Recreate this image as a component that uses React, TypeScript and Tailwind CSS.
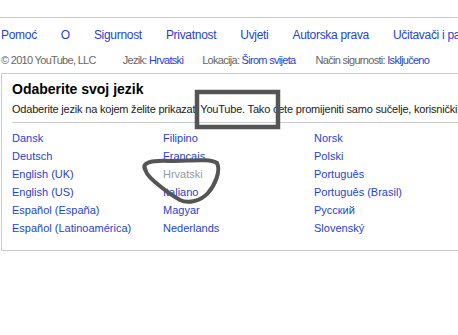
const navLinks = ["Pomoć", "O", "Sigurnost", "Privatnost", "Uvjeti", "Autorska prava", "Učitavači i partneri"];

const columns = [
  ["Dansk", "Deutsch", "English (UK)", "English (US)", "Español (España)", "Español (Latinoamérica)"],
  ["Filipino", "Français", "Hrvatski", "Italiano", "Magyar", "Nederlands"],
  ["Norsk", "Polski", "Português", "Português (Brasil)", "Русский", "Slovenský"],
];

const current = "Hrvatski";

function MetaItem({ label, value, className }: { label: string; value: string; className?: string }) {
  return (
    <span className={className}>
      {label} <span className="text-[#1f44cc]">{value}</span>
    </span>
  );
}

export default function App() {
  return (
    <div className="relative w-[458px] h-[335px] overflow-hidden bg-white font-['Liberation_Sans',Arial,sans-serif]">
      <div className="w-[980px]">
        <div className="mt-[17px] border-t border-[#cccccc]" />

        <nav className="mt-[9px] pl-px flex gap-[24px] text-[12px] leading-[16px] tracking-[-0.3px] text-[#1f44cc] whitespace-nowrap">
          {navLinks.map((l) => (
            <a key={l}>{l}</a>
          ))}
        </nav>

        <div className="mt-[10px] pl-px flex text-[11px] leading-[14px] tracking-[-0.7px] text-[#666666] whitespace-nowrap">
          <span>© 2010 YouTube, LLC</span>
          <MetaItem className="ml-[27px]" label="Jezik:" value="Hrvatski" />
          <MetaItem className="ml-[19px]" label="Lokacija:" value="Širom svijeta" />
          <MetaItem className="ml-[20px]" label="Način sigurnosti:" value="Isključeno" />
        </div>

        <section className="mt-[6px] ml-px border border-[#cccccc] pt-[6px] pb-[13px] px-[10px]">
          <h2 className="text-[14px] leading-[18px] font-bold text-black">Odaberite svoj jezik</h2>
          <p className="mt-[3px] text-[11px] leading-[16px] tracking-[-0.2px] text-[#222222] whitespace-nowrap">
            Odaberite jezik na kojem želite prikazati YouTube. Tako ćete promijeniti samo sučelje, korisnički tekst neće biti preveden.
          </p>
          <div className="mt-[5px] border-t border-[#cccccc]" />
          <div className="mt-[6px] grid grid-cols-[151px_151px_151px] text-[11px] leading-[18px]">
            {columns.map((col, i) => (
              <ul key={i}>
                {col.map((lang) => (
                  <li key={lang} className={lang === current ? "text-[#999999]" : "text-[#1f44cc]"}>
                    {lang}
                  </li>
                ))}
              </ul>
            ))}
          </div>
        </section>
      </div>

      {/* hand-drawn markup over the screenshot */}
      <svg className="absolute inset-0 pointer-events-none" width="458" height="335" viewBox="0 0 458 335">
        <rect x="197" y="92" width="81" height="35" fill="none" stroke="#555555" strokeWidth="4.5" />
        <path
          d="M146,171 C140,163 150,160 170,161 C190,161 210,158 217,163 C221,171 215,185 208,193 C201,201 188,204 180,200 C171,195 162,188 155,182 C149,177 145,173 145,168"
          fill="none"
          stroke="#555555"
          strokeWidth="4"
          strokeLinecap="round"
        />
      </svg>
    </div>
  );
}
